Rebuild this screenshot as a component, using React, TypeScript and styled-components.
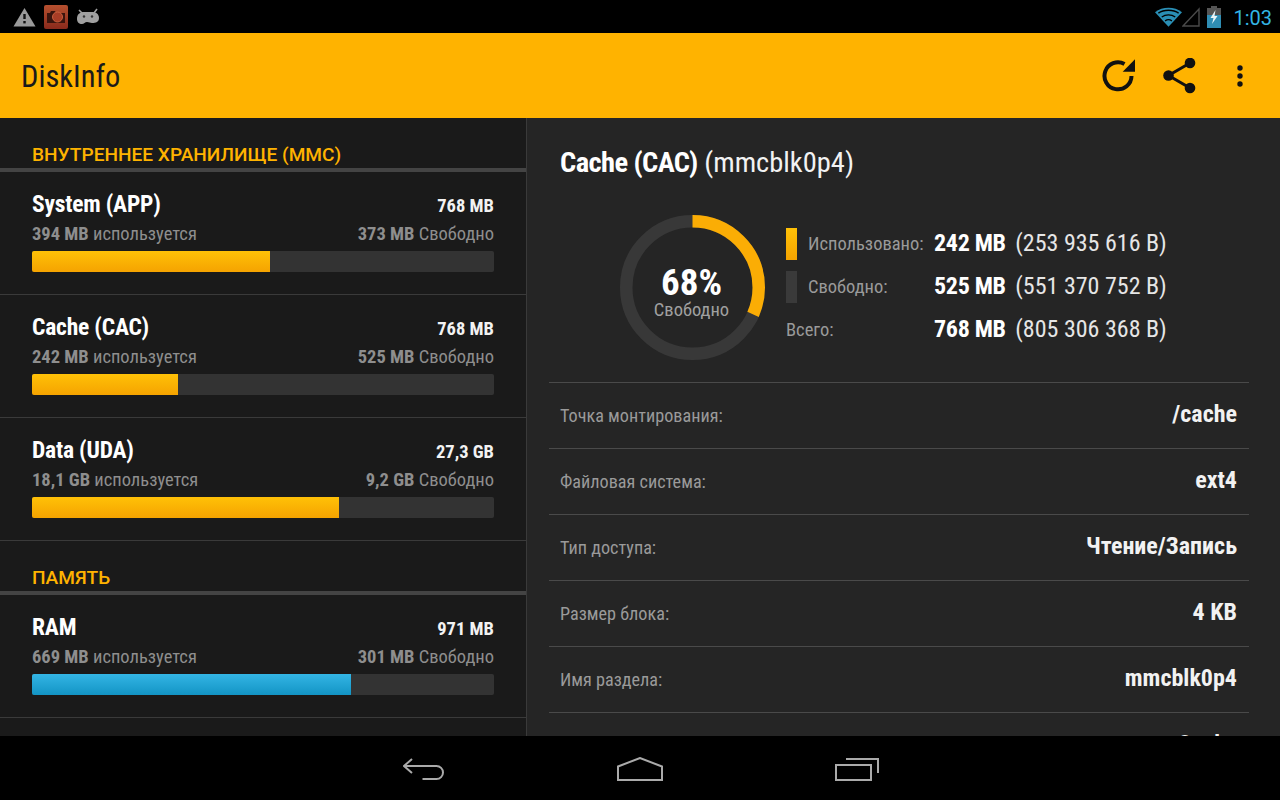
import { FC } from 'react';
import { styled, createGlobalStyle } from 'styled-components';

const GlobalStyle = createGlobalStyle`
    html, body {
        margin: 0;
        padding: 0;
        background: #000;
    }
    body {
        font-family: Roboto, "Liberation Sans", sans-serif;
        font-stretch: condensed;
    }
`;

const Screen = styled.div`
    width: 1280px;
    height: 800px;
    display: flex;
    flex-direction: column;
    overflow: hidden;
`;

const StatusBar = styled.div`
    height: 33px;
    flex: none;
    background: #000;
    display: flex;
    align-items: center;
    justify-content: space-between;
    padding: 0 8px 0 13px;
`;

const StatusGroup = styled.div`
    display: flex;
    align-items: center;
    gap: 8px;
`;

const StatusRight = styled.div`
    display: flex;
    align-items: center;
`;

const Battery = styled.svg`
    margin-left: 7px;
`;

const Clock = styled.span`
    font-size: 20px;
    font-stretch: normal;
    color: #33b5e5;
    margin-left: 12px;
    padding-top: 2px;
`;

const ActionBar = styled.div`
    height: 85px;
    flex: none;
    background: #ffb300;
    display: flex;
    align-items: center;
    justify-content: space-between;
    padding: 0 37px 0 21px;
`;

const AppTitle = styled.div`
    font-size: 30.5px;
    color: #1a1a1a;
    padding-top: 2px;
`;

const ActionIcons = styled.div`
    display: flex;
    align-items: center;
    gap: 27px;
`;

const MoreIcon = styled.svg`
    margin-left: 13px;
`;

const Body = styled.div`
    flex: 1;
    min-height: 0;
    display: flex;
`;

const LeftPane = styled.div`
    width: 526px;
    flex: none;
    background: #1a1a1a;
    border-right: 1px solid #3a3a3a;
    overflow: hidden;
`;

const SectionTitle = styled.div`
    height: 54px;
    box-sizing: border-box;
    padding: 26px 32px 0;
    font-size: 19.1px;
    font-stretch: normal;
    line-height: 21px;
    font-weight: 500;
    color: #ffb300;
    border-bottom: 4px solid #444;
`;

const Row = styled.div`
    height: 123px;
    box-sizing: border-box;
    padding: 17px 32px 0;
    border-bottom: 1px solid #3a3a3a;
`;

const RowLine = styled.div`
    display: flex;
    justify-content: space-between;
    align-items: baseline;
`;

const RowName = styled.span`
    font-size: 23.5px;
    line-height: 30px;
    font-weight: 700;
    letter-spacing: -0.2px;
    color: #fff;
`;

const RowTotal = styled.span`
    font-size: 18.5px;
    font-weight: 700;
    color: #f2f2f2;
`;

const RowUsage = styled(RowLine)`
    font-size: 18.5px;
    line-height: 28px;
    margin-top: 1px;
    color: #8e8e8e;
    b {
        font-weight: 700;
    }
`;

const Track = styled.div`
    height: 21px;
    margin-top: 3px;
    background: #333;
    border-radius: 2px;
    overflow: hidden;
`;

const Fill = styled.div<{ $blue?: boolean }>`
    height: 100%;
    background: ${props => props.$blue
        ? 'linear-gradient(#33b5e5, #1394c4)'
        : 'linear-gradient(#ffc107, #f5a300)'};
`;

const RightPane = styled.div`
    flex: 1;
    min-width: 0;
    background: #252525;
    padding: 0 31px 0 22px;
    overflow: hidden;
`;

const DetailTitle = styled.div`
    height: 89px;
    box-sizing: border-box;
    padding: 27px 0 0 11px;
    font-size: 28.5px;
    line-height: 36px;
    color: #f2f2f2;
    b {
        font-weight: 700;
        color: #fff;
        letter-spacing: -0.6px;
    }
`;

const Summary = styled.div`
    height: 175px;
    display: flex;
    padding-left: 71px;
`;

const DonutBox = styled.div`
    position: relative;
    width: 145px;
    height: 145px;
    margin-top: 8px;
    flex: none;
`;

const DonutText = styled.div`
    position: absolute;
    inset: 8px 2px 0 0;
    display: flex;
    flex-direction: column;
    align-items: center;
    justify-content: center;
    color: #a0a0a0;
    font-size: 18.5px;
    line-height: 19px;
`;

const DonutValue = styled.div`
    font-size: 37px;
    line-height: 37px;
    font-weight: 700;
    color: #fff;
`;

const Legend = styled.div`
    margin-left: 21px;
    display: flex;
    flex-direction: column;
    padding-top: 15px;
`;

const LegendRow = styled.div`
    height: 43px;
    display: flex;
    align-items: center;
`;

const Swatch = styled.div<{ $used?: boolean }>`
    width: 11px;
    height: 32px;
    margin-right: 11px;
    background: ${props => props.$used ? 'linear-gradient(#ffc107, #f5a300)' : '#3a3a3a'};
`;

const LegendLabel = styled.span<{ $wide?: boolean }>`
    width: ${props => props.$wide ? '148px' : '126px'};
    font-size: 18.5px;
    color: #9a9a9a;
`;

const LegendValue = styled.span`
    font-size: 24px;
    color: #e6e6e6;
    padding-bottom: 2px;
    b {
        font-weight: 700;
        color: #fff;
        letter-spacing: -0.3px;
        margin-right: 4px;
    }
`;

const InfoRow = styled.div`
    height: 66px;
    box-sizing: border-box;
    border-top: 1px solid #4a4a4a;
    padding: 0 12px 0 11px;
    display: flex;
    align-items: center;
    justify-content: space-between;
`;

const InfoLabel = styled.span`
    font-size: 18.2px;
    color: #9a9a9a;
`;

const InfoValue = styled.span`
    font-size: 24px;
    font-weight: 700;
    color: #f2f2f2;
    padding-bottom: 4px;
`;

const NavBar = styled.div`
    height: 64px;
    box-sizing: border-box;
    flex: none;
    background: #000;
    display: flex;
    align-items: center;
    justify-content: center;
    gap: 172px;
    padding: 2px 0 0 2px;
`;

type Disk = {
    name: string;
    total: string;
    used: string;
    free: string;
    percent: number;
    blue?: boolean;
};

const storage: Disk[] = [
    { name: 'System (APP)', total: '768 MB', used: '394 MB', free: '373 MB', percent: 51.5 },
    { name: 'Cache (CAC)', total: '768 MB', used: '242 MB', free: '525 MB', percent: 31.6 },
    { name: 'Data (UDA)', total: '27,3 GB', used: '18,1 GB', free: '9,2 GB', percent: 66.4 },
];

const memory: Disk[] = [
    { name: 'RAM', total: '971 MB', used: '669 MB', free: '301 MB', percent: 69, blue: true },
];

const info = [
    ['Точка монтирования:', '/cache'],
    ['Файловая система:', 'ext4'],
    ['Тип доступа:', 'Чтение/Запись'],
    ['Размер блока:', '4 KB'],
    ['Имя раздела:', 'mmcblk0p4'],
    ['', '8 mbs'],
];

const DiskRow: FC<{ disk: Disk }> = ({ disk }) => (
    <Row>
        <RowLine>
            <RowName>{disk.name}</RowName>
            <RowTotal>{disk.total}</RowTotal>
        </RowLine>
        <RowUsage>
            <span><b>{disk.used}</b> используется</span>
            <span><b>{disk.free}</b> Свободно</span>
        </RowUsage>
        <Track>
            <Fill $blue={disk.blue} style={{ width: `${disk.percent}%` }} />
        </Track>
    </Row>
);

const Donut = () => {
    const r = 66.25;
    const c = 2 * Math.PI * r;
    return (
        <svg width="145" height="145" viewBox="0 0 145 145">
            <circle cx="72.5" cy="72.5" r={r} fill="none" stroke="#383838" strokeWidth="12.5" />
            <circle
                cx="72.5"
                cy="72.5"
                r={r}
                fill="none"
                stroke="#fbad05"
                strokeWidth="12.5"
                strokeDasharray={`${c * 0.316} ${c}`}
                transform="rotate(-90 72.5 72.5)"
            />
        </svg>
    );
};

export default function App() {
    return (
        <Screen>
            <GlobalStyle />
            <StatusBar>
                <StatusGroup>
                    <svg width="23" height="20" viewBox="0 0 23 20">
                        <path d="M11.5 1 L22.5 19.5 H0.5 Z" fill="#9a9a9a" />
                        <rect x="10.3" y="7" width="2.4" height="5" fill="#111" />
                        <rect x="10.3" y="14" width="2.4" height="2.4" fill="#111" />
                    </svg>
                    <svg width="24" height="24" viewBox="0 0 24 24">
                        <defs>
                            <linearGradient id="camBg" x1="0" y1="0" x2="0" y2="1">
                                <stop offset="0" stopColor="#b5502f" />
                                <stop offset="1" stopColor="#8a2a1c" />
                            </linearGradient>
                        </defs>
                        <rect width="24" height="24" rx="2" fill="url(#camBg)" />
                        <path d="M3 8 H6 L7 6 H11 L12 8 H21 V18 H3 Z" fill="#3a140d" />
                        <circle cx="13.5" cy="12" r="5" fill="#a83d26" stroke="#c8603f" strokeWidth="1" />
                    </svg>
                    <svg width="24" height="20" viewBox="0 0 24 20">
                        <path d="M3 3 L6 6 M21 2 L18 6" stroke="#a0a0a0" strokeWidth="1.6" />
                        <path d="M1 12 C1 7 4 5 8 5 H16 C20 5 23 7 23 11 C23 15 20 16 16 16 C14 16 13 15 11 15 C9 15 8 17 6 17 C3 17 1 15 1 12 Z" fill="#a0a0a0" />
                        <circle cx="8" cy="9.5" r="1.2" fill="#333" />
                        <circle cx="16" cy="9.5" r="1.2" fill="#333" />
                    </svg>
                </StatusGroup>
                <StatusRight>
                    <svg width="27" height="20" viewBox="0 0 28 20">
                        <path d="M14 20 L0 5 C8 -1 20 -1 28 5 Z" fill="#2a8fb5" />
                        <path d="M3.5 6 C9 2 19 2 24.5 6 M7 10 C11 7 17 7 21 10 M10.5 14 C12.5 12.5 15.5 12.5 17.5 14" stroke="#000" strokeWidth="1.4" fill="none" />
                    </svg>
                    <svg width="18" height="20" viewBox="0 0 18 20">
                        <path d="M17 2 V19 H1 Z" fill="none" stroke="#4a4a4a" strokeWidth="1.4" />
                    </svg>
                    <Battery width="14" height="22" viewBox="0 0 14 22">
                        <rect x="4" y="0" width="6" height="2" fill="#555" />
                        <rect x="0" y="2" width="14" height="20" fill="#555" />
                        <rect x="0" y="9" width="14" height="13" fill="#2f8db3" />
                        <path d="M8.5 4 L3.5 12 H6.5 L5 18 L10.5 10 H7.5 Z" fill="#e8f4f8" />
                    </Battery>
                    <Clock>1:03</Clock>
                </StatusRight>
            </StatusBar>
            <ActionBar>
                <AppTitle>DiskInfo</AppTitle>
                <ActionIcons>
                    <svg width="34" height="34" viewBox="0 0 34 34">
                        <path d="M29.5 17 A13.5 13.5 0 1 1 22.5 5" fill="none" stroke="#111" strokeWidth="4" />
                        <path d="M33 0.3 V12.7 H20.7 Z" fill="#111" />
                    </svg>
                    <svg width="34" height="36" viewBox="0 0 34 36">
                        <path d="M27 5 L5.5 17.5 L27 30" fill="none" stroke="#111" strokeWidth="3" />
                        <circle cx="27" cy="5" r="5.3" fill="#111" />
                        <circle cx="5.5" cy="17.5" r="5.3" fill="#111" />
                        <circle cx="27" cy="30" r="5.3" fill="#111" />
                    </svg>
                    <MoreIcon width="6" height="22" viewBox="0 0 6 22">
                        <circle cx="3" cy="3" r="2.7" fill="#111" />
                        <circle cx="3" cy="11" r="2.7" fill="#111" />
                        <circle cx="3" cy="19" r="2.7" fill="#111" />
                    </MoreIcon>
                </ActionIcons>
            </ActionBar>
            <Body>
                <LeftPane>
                    <SectionTitle>ВНУТРЕННЕЕ ХРАНИЛИЩЕ (MMC)</SectionTitle>
                    {storage.map(d => <DiskRow key={d.name} disk={d} />)}
                    <SectionTitle>ПАМЯТЬ</SectionTitle>
                    {memory.map(d => <DiskRow key={d.name} disk={d} />)}
                </LeftPane>
                <RightPane>
                    <DetailTitle><b>Cache (CAC)</b> (mmcblk0p4)</DetailTitle>
                    <Summary>
                        <DonutBox>
                            <Donut />
                            <DonutText>
                                <DonutValue>68%</DonutValue>
                                Свободно
                            </DonutText>
                        </DonutBox>
                        <Legend>
                            <LegendRow>
                                <Swatch $used />
                                <LegendLabel>Использовано:</LegendLabel>
                                <LegendValue><b>242 MB</b> (253 935 616 B)</LegendValue>
                            </LegendRow>
                            <LegendRow>
                                <Swatch />
                                <LegendLabel>Свободно:</LegendLabel>
                                <LegendValue><b>525 MB</b> (551 370 752 B)</LegendValue>
                            </LegendRow>
                            <LegendRow>
                                <LegendLabel $wide>Всего:</LegendLabel>
                                <LegendValue><b>768 MB</b> (805 306 368 B)</LegendValue>
                            </LegendRow>
                        </Legend>
                    </Summary>
                    {info.map(([label, value]) => (
                        <InfoRow key={value}>
                            <InfoLabel>{label}</InfoLabel>
                            <InfoValue>{value}</InfoValue>
                        </InfoRow>
                    ))}
                </RightPane>
            </Body>
            <NavBar>
                <svg width="42" height="24" viewBox="0 0 42 24">
                    <path d="M9 2 L1 9 L9 16 M1 9 H33.5 A6.5 6.5 0 0 1 33.5 22 H19.5" fill="none" stroke="#aaa" strokeWidth="2" />
                </svg>
                <svg width="46" height="24" viewBox="0 0 46 24">
                    <path d="M1 9.5 L23 1 L45 9.5 V23 H1 Z" fill="none" stroke="#aaa" strokeWidth="2" />
                </svg>
                <svg width="44" height="24" viewBox="0 0 44 24">
                    <rect x="1" y="8" width="35" height="15" fill="none" stroke="#aaa" strokeWidth="2" />
                    <path d="M11 2 H43 V16" fill="none" stroke="#aaa" strokeWidth="2" />
                </svg>
            </NavBar>
        </Screen>
    );
}
